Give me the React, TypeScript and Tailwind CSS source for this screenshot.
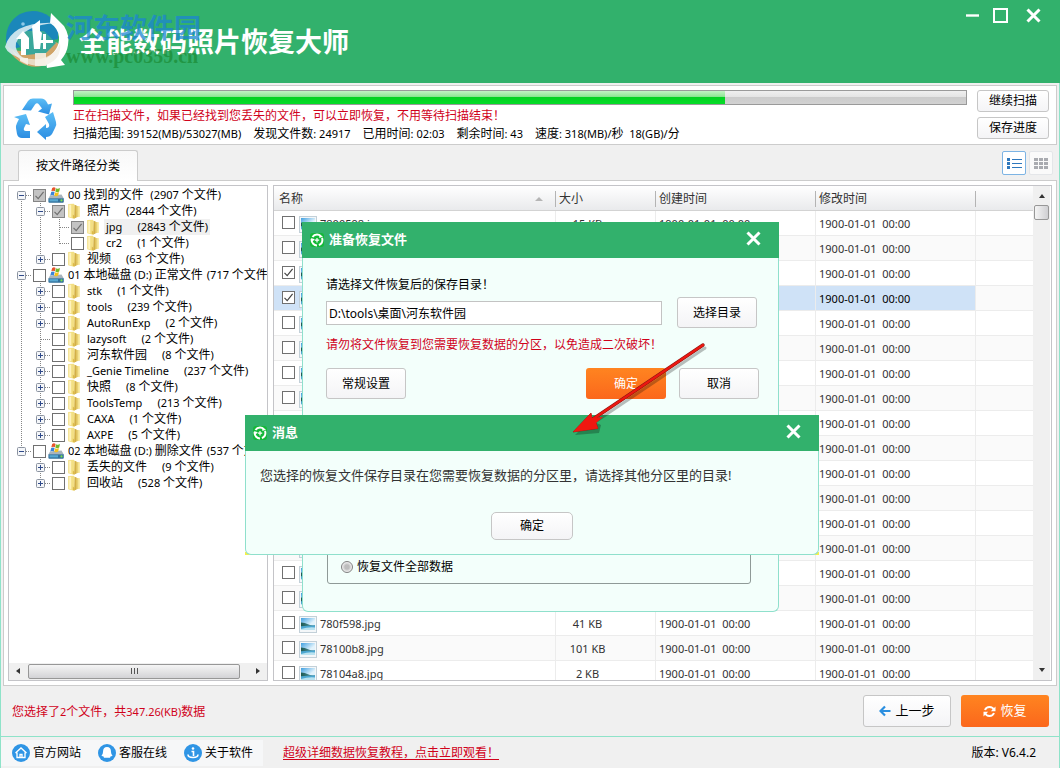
import React from "react";

/* Latin runs are set one pixel smaller than the Chinese glyphs around them. */
function Mixed({ text }: { text: string }) {
  const parts = text.split(/([\x20-\x7e]+)/);
  return (
    <>
      {parts.map((p, i) =>
        i % 2 ? (
          <span key={i} className="text-[11px]">
            {p}
          </span>
        ) : (
          p
        ),
      )}
    </>
  );
}

function Check({ label, checked = false, grey = false }: { label: string; checked?: boolean; grey?: boolean }) {
  return (
    <span className="grid size-[13px] shrink-0">
      <input
        type="checkbox"
        aria-label={label}
        defaultChecked={checked}
        className={`col-start-1 row-start-1 size-[13px] appearance-none border ${
          grey ? "border-[#858585] bg-[#c3c3c3]" : "border-[#707070] bg-white"
        }`}
      />
      {checked && (
        <svg viewBox="0 0 13 13" className="pointer-events-none col-start-1 row-start-1 size-[13px]" aria-hidden="true">
          <path d="M2.5 6.8 5.2 9.6 10.6 2.8" fill="none" stroke={grey ? "#6f6f6f" : "#444"} strokeWidth="1.2" />
        </svg>
      )}
    </span>
  );
}

function FolderIcon() {
  return (
    <svg viewBox="0 0 16 16" className="size-4 shrink-0" aria-hidden="true">
      <path d="M8 2.6 12.8 3.4V13.6L8 14.8Z" fill="#e9d174" />
      <path d="M11.400 3.400 12.800 3.600V13.400L11.400 13.900Z" fill="#fdf0ae" />
      <path d="M1.200 1 6.800 .8 7.600 1.800V15L6.800 15.800 1.200 14.200Z" fill="#f3df83" />
      <path d="M2.200 1.800 4.200 1.700V14.200L2.200 13.700Z" fill="#fff3bd" />
      <path d="M7.600 2 9.400 2.200V14.400L7.200 15.600Z" fill="#d3b047" />
      <path d="M5.800 11.500 7.600 13V15.400L5.800 15Z" fill="#dcb948" />
    </svg>
  );
}

function DiskIcon() {
  return (
    <svg viewBox="0 0 16 16" className="size-4 shrink-0" aria-hidden="true">
      <path d="M2 8.500 13.500 7.500 15.800 11.500H.4Z" fill="#a9b4bd" />
      <path d="M.4 11.300h15.400v3.400q0 1-1 1H1.400q-1 0-1-1Z" fill="#33719c" />
      <path d="M1.500 12.200h8.500v2.200H1.500z" fill="#58a9d2" />
      <circle cx="13.500" cy="13.400" r="1.100" fill="#7be04c" />
      <path d="M4.200 .9Q6 -.2 7.600 .9L6.800 4.300Q5.100 3.300 3.300 4.300Z" fill="#e8532b" />
      <path d="M8.100 1.200Q10 2.300 12 1L11.200 4.500Q9.300 5.700 7.300 4.600Z" fill="#74b82b" />
      <path d="M3.200 4.900Q4.900 3.900 6.600 4.900L5.800 8.400Q4.100 7.400 2.300 8.400Z" fill="#3b84d8" />
      <path d="M7.100 5.200Q9.100 6.300 11 5.100L10.200 8.600Q8.300 9.800 6.300 8.700Z" fill="#f5c01e" />
    </svg>
  );
}

function PhotoIcon() {
  return (
    <svg viewBox="0 0 18 17" className="h-[17px] w-[18px] shrink-0" aria-hidden="true">
      <defs>
        <linearGradient id="sky" x1="0" y1="0" x2="1" y2="1">
          <stop offset="0" stopColor="#3f9fe0" />
          <stop offset=".6" stopColor="#e2f3fc" />
        </linearGradient>
        <linearGradient id="hill" x1="0" y1="0" x2="1" y2="0">
          <stop offset="0" stopColor="#1d5a52" />
          <stop offset="1" stopColor="#5f9fae" />
        </linearGradient>
      </defs>
      <rect x=".5" y=".5" width="17" height="16" fill="#f4f7f9" stroke="#c3d0d8" />
      <rect x="2" y="2" width="14" height="12" fill="url(#sky)" />
      <path d="M2 6.500q4 .2 7 1.800t7 .7v2H2Z" fill="url(#hill)" />
      <path d="M2 10.300q6-.8 14-.8V14H2Z" fill="#4ba6d0" />
      <path d="M2 13q7-2.200 14-1.500V14H2Z" fill="#b9e2f0" />
    </svg>
  );
}

function BrandMark() {
  return (
    <svg viewBox="0 0 14 14" className="size-[14px] shrink-0" aria-hidden="true">
      <rect width="14" height="14" rx="3" fill="#14b838" />
      <circle cx="7" cy="7" r="5.400" fill="none" stroke="#fff" strokeWidth="2" strokeDasharray="9.300 2" strokeDashoffset="3" />
      <path d="M1 5 4.800 6.200 2.400 8.800ZM9.500 1.200 9.300 5 13 3.800Z" fill="#fff" />
      <path d="M7 5v4.400M4.800 7.200h4.400" stroke="#fff" strokeWidth="1.200" />
    </svg>
  );
}

function Cross() {
  return (
    <svg viewBox="0 0 15 15" className="size-[15px]" aria-hidden="true">
      <path d="M1.500 1.500 13.500 13.500M13.500 1.500 1.500 13.500" stroke="#fff" strokeWidth="3" />
    </svg>
  );
}

const plainButton =
  "flex items-center justify-center rounded-[3px] border border-[#c6c6c6] bg-linear-to-b from-white to-[#f4f4f6] text-black";
const orangeButton =
  "flex items-center justify-center rounded-[3px] bg-linear-to-b from-[#ff8420] to-[#fb671c] text-white";

/* ---------- tree ---------- */

type Guide = "none" | "v" | "plus" | "minus" | "tee" | "end";
type Node = {
  guides: Guide[];
  name: string;
  count: string;
  checked?: boolean;
  disk?: boolean;
  selected?: boolean;
  top?: boolean;
  bottom?: boolean;
};

const child = (name: string, count: string, guides: Guide[] = ["v", "plus"], bottom = false): Node => ({
  guides,
  name,
  count,
  bottom,
});

const nodes: Node[] = [
  { guides: ["minus"], name: "00 找到的文件 ", count: "(2907 个文件)", checked: true, disk: true, top: true },
  { guides: ["v", "minus"], name: "照片", count: "(2844 个文件)", checked: true },
  { guides: ["v", "v", "tee"], name: "jpg", count: "(2843 个文件)", checked: true, selected: true },
  { guides: ["v", "v", "end"], name: "cr2", count: "(1 个文件)" },
  child("视频", "(63 个文件)", ["v", "plus"], true),
  { guides: ["minus"], name: "01 本地磁盘 (D:) 正常文件", count: "(717 个文件)", disk: true },
  child("stk", "(1 个文件)"),
  child("tools", "(239 个文件)"),
  child("AutoRunExp", "(2 个文件)"),
  child("lazysoft", "(2 个文件)", ["v", "tee"]),
  child("河东软件园", "(8 个文件)"),
  child("_Genie Timeline", "(237 个文件)"),
  child("快照", "(8 个文件)"),
  child("ToolsTemp", "(213 个文件)"),
  child("CAXA", "(1 个文件)"),
  child("AXPE", "(5 个文件)", ["v", "plus"], true),
  { guides: ["minus"], name: "02 本地磁盘 (D:) 删除文件", count: "(537 个文件)", disk: true, bottom: true },
  child("丢失的文件", "(9 个文件)", ["none", "plus"]),
  child("回收站", "(528 个文件)", ["none", "plus"], true),
];

function GuideCell({ kind, top, bottom }: { kind: Guide; top?: boolean; bottom?: boolean }) {
  const box = kind === "plus" || kind === "minus";
  const half = kind === "end" || (box && bottom);
  return (
    <svg viewBox="0 0 19 16" className="h-4 w-[19px] shrink-0" aria-hidden="true">
      {kind !== "none" && (
        <path d={`M9.500 ${top ? 8 : 0}V${half ? 9 : 16}`} stroke="#858585" strokeDasharray="1 1" />
      )}
      {kind !== "none" && kind !== "v" && <path d="M10 8.500H19" stroke="#858585" strokeDasharray="1 1" />}
      {box && (
        <>
          <rect x="5.500" y="4.500" width="8" height="8" rx="1" fill="#f4f6f9" stroke="#8b93a0" />
          <path d={kind === "plus" ? "M7 8.500h5M9.500 6v5" : "M7 8.500h5"} stroke="#2f4a8a" />
        </>
      )}
    </svg>
  );
}

function Tree() {
  return (
    <ul className="min-h-0 flex-1 overflow-hidden pt-px pl-[3px]">
      {nodes.map((n) => (
        <li key={n.name} className="flex h-4 items-center whitespace-pre">
          {n.guides.map((g, i) => {
            const last = i === n.guides.length - 1;
            return <GuideCell key={i} kind={g} top={last && n.top} bottom={last && n.bottom} />;
          })}
          <span className="ml-0.5 flex">
            <Check label={n.name} checked={n.checked} grey={n.checked} />
          </span>
          <span className="ml-0.5 flex">{n.disk ? <DiskIcon /> : <FolderIcon />}</span>
          <span
            className={`ml-0.5 flex h-4 items-center px-0.5 leading-4 text-black ${n.disk ? "gap-1" : "gap-[15px]"} ${
              n.selected ? "bg-[#f0f0f0]" : ""
            }`}
          >
            <span>
              <Mixed text={n.name} />
            </span>
            <span>
              <Mixed text={n.count} />
            </span>
          </span>
        </li>
      ))}
    </ul>
  );
}

/* ---------- file table ---------- */

type FileRow = { name?: string; size?: string; created?: string; checked?: boolean; selected?: boolean };
const stamp = "1900-01-01  00:00";
const files: FileRow[] = Array.from({ length: 19 }, () => ({}));
files[0] = { name: "7800598.jpg", size: "15 KB", created: stamp };
files[2] = { checked: true };
files[3] = { checked: true, selected: true };
files[16] = { name: "780f598.jpg", size: "41 KB", created: stamp };
files[17] = { name: "78100b8.jpg", size: "101 KB", created: stamp };
files[18] = { name: "78104a8.jpg", size: "2 KB", created: stamp };

function FileTable() {
  const head = "h-[25px] bg-linear-to-b from-white to-[#e9eaec] border-b border-[#d3d3d3] p-0 pt-0.5 text-left font-normal";
  const inner = "flex h-4 items-center border-r border-[#b4b4b4] pl-[3px] leading-4";
  return (
    <div className="min-w-0 flex-1 overflow-hidden">
      <table className="w-full table-fixed border-separate border-spacing-0 text-[#333]">
        <colgroup>
          <col className="w-[282px]" />
          <col className="w-[100px]" />
          <col className="w-[160px]" />
          <col className="w-[160px]" />
          <col />
        </colgroup>
        <thead>
          <tr>
            <th className={head}>
              <div className="flex h-4 items-center justify-between border-r border-[#b4b4b4] pr-3 pl-[5px] leading-4">
                名称
                <svg viewBox="0 0 8 4" className="h-1 w-2" aria-hidden="true">
                  <path d="M4 0 8 4H0Z" fill="#b5b5b5" />
                </svg>
              </div>
            </th>
            <th className={head}>
              <div className={inner}>大小</div>
            </th>
            <th className={head}>
              <div className={inner}>创建时间</div>
            </th>
            <th className={head}>
              <div className={inner}>修改时间</div>
            </th>
            <th className={head} aria-label="空" />
          </tr>
        </thead>
        <tbody className="text-[11px]">
          {files.map((f, i) => {
            const tone = f.selected ? "bg-[#cfe2f7] text-black" : i % 2 ? "bg-[#fafafa]" : "bg-white";
            const cell = `h-[25px] border-r border-b border-[#ececec] p-0 pt-0.5 whitespace-pre ${tone}`;
            return (
              <tr key={i}>
                <td className={`h-[25px] border-r border-b border-[#ececec] p-0 whitespace-pre ${tone}`}>
                  <div className="flex h-6 items-center pl-2">
                    <span className="mb-px flex">
                      <Check label={f.name ?? `文件 ${i + 1}`} checked={f.checked} />
                    </span>
                    <span className="mt-0.5 mr-[3px] ml-1 flex">
                      <PhotoIcon />
                    </span>
                    <span className="pt-0.5">{f.name}</span>
                  </div>
                </td>
                <td className={`${cell} pr-9 text-center`}>{f.size}</td>
                <td className={`${cell} pl-[3px]`}>{f.created}</td>
                <td className={`${cell} pl-[3px]`}>{stamp}</td>
                <td className={`h-[25px] border-b border-[#ececec] p-0 ${i % 2 ? "bg-[#fafafa]" : "bg-white"}`} />
              </tr>
            );
          })}
        </tbody>
      </table>
    </div>
  );
}

/* ---------- dialogs ---------- */

function Dialog({ title, className, children }: { title: string; className: string; children: React.ReactNode }) {
  return (
    <section role="dialog" aria-label={title} className={`absolute flex flex-col ${className}`}>
      <header className="flex h-9 shrink-0 items-center gap-[5px] bg-[#32b16c] pr-[18px] pl-2 text-[13px] font-bold text-white">
        <BrandMark />
        <h2 className="flex-1">{title}</h2>
        <button type="button" aria-label="关闭" className="mb-1">
          <Cross />
        </button>
      </header>
      <div className="flex flex-1 flex-col rounded-b-md border border-t-0 border-[#8fe0cc] bg-[#f3fffb]">{children}</div>
    </section>
  );
}

function RestoreDialog() {
  return (
    <Dialog title="准备恢复文件" className="top-[222px] left-[302px] h-[390px] w-[477px]">
      <div className="flex flex-1 flex-col px-[23px] pt-[18px] pb-[27px] text-black">
        <label htmlFor="dir" className="leading-[18px]">
          请选择文件恢复后的保存目录！
        </label>
        <div className="mt-[3px] flex items-center gap-[15px]">
          <input
            id="dir"
            defaultValue="D:\tools\桌面\河东软件园"
            className="h-6 min-w-0 flex-1 border border-[#c3c3c3] bg-white px-0.5 text-xs"
          />
          <button type="button" className={`${plainButton} mr-[-2px] h-[31px] w-20`}>
            选择目录
          </button>
        </div>
        <p className="mt-2 leading-[18px] text-[#d0021b]">请勿将文件恢复到您需要恢复数据的分区，以免造成二次破坏！</p>
        <div className="mt-[14px] flex gap-[13px]">
          <button type="button" className={`${plainButton} mr-auto h-[31px] w-20`}>
            常规设置
          </button>
          <button type="button" className={`${orangeButton} h-[31px] w-20`}>
            确定
          </button>
          <button type="button" className={`${plainButton} mr-[-4px] h-[31px] w-20`}>
            取消
          </button>
        </div>
        <fieldset className="mx-px mt-4 mr-1 flex flex-1 items-end rounded-[3px] border border-[#8f9a97] pb-[7px] pl-[13px]">
          <label className="flex items-center gap-1 leading-[18px]">
            <input
              type="radio"
              name="mode"
              className="size-3 appearance-none rounded-full border border-[#808080] bg-radial from-[#bdbdbd] from-30% to-[#f2f2f2] to-70%"
            />
            恢复文件全部数据
          </label>
        </fieldset>
      </div>
    </Dialog>
  );
}

function MessageDialog() {
  return (
    <Dialog title="消息" className="top-[415px] left-[245px] h-[140px] w-[574px] bg-[linear-gradient(to_top,#f4f04a_3px,transparent_3px)]">
      <p className="px-[14px] pt-[15px] text-[13px] leading-[18px] text-[#333]">
        您选择的恢复文件保存目录在您需要恢复数据的分区里，请选择其他分区里的目录!
      </p>
      <button type="button" className={`${plainButton} mx-auto mt-7 h-7 w-[82px] rounded-[5px]`}>
        确定
      </button>
    </Dialog>
  );
}

/* ---------- window ---------- */

function Logo() {
  return (
    <svg viewBox="0 0 70 62" className="h-[62px] w-[70px] shrink-0" aria-hidden="true">
      <path d="M6 33Q5 14 20 5 36-2 50 8L58 18 58 30 12 40Q7 38 6 33Z" fill="#1b87ba" />
      <path d="M8 38Q22 46 36 38T58 34Q60 46 50 54 34 62 20 53 10 46 8 38Z" fill="#d0a468" />
      <path d="M16 32 26 22 44 22 56 34 46 44 26 46Z" fill="#3aa79b" />
      <path d="M51 4 64 17Q70 27 68 36 67 44 61 51L65 56 47 59 45 50Q60 41 59 28 58 19 50 14Z" fill="#fff" />
      <path d="M5 38Q12 12 56 14 24 16 16 34 14 42 24 50 8 46 5 38Z" fill="#d8ebf2" opacity=".9" />
      <path d="M12 41Q22 52 40 50 56 46 60 34 62 50 46 56 24 60 12 41Z" fill="#f1ede4" opacity=".75" />
      <path d="m16 30 7-8 6 7v11h-3q0 0 0 0V46h-5V30Z" fill="#fff" />
      <path d="M32 17 40 11 40 22 42 24 40 40 34 40Z" fill="#fff" />
      <path d="M20 49h8v7l-8-4ZM35 44h11v13H35Z" fill="#f7f3ea" opacity=".85" />
      <path d="M43 25h3v6h7v3h-7v6h-3v-6h-6v-3h6Z" fill="#fff" />
      <circle cx="23" cy="15" r="1.800" fill="#8cc9e8" />
    </svg>
  );
}

function RecycleIcon() {
  return (
    <svg viewBox="0 0 44 42" className="h-[42px] w-11 shrink-0" aria-hidden="true">
      <defs>
        <linearGradient id="rc" x1="0" y1="0" x2="0" y2="1">
          <stop offset="0" stopColor="#5bbdf5" />
          <stop offset="1" stopColor="#2b8de2" />
        </linearGradient>
      </defs>
      <path d="M8 12 14 3Q16 .6 19 .6h8q4 0 6 4l1 2 4-1-3 11-11-3 4-3-3-4q-2-2.500-4 0l-4 6Z" fill="url(#rc)" />
      <path d="m0 19 12-3 4 11-4-1-2 4q-1 3 2 3h4v7H8q-4 0-5-4l-1-6q-.4-2 1-5l2-4Z" fill="url(#rc)" />
      <path d="m31 19 8-5 3 10q1 3-1 6l-3 6q-2 3-6 3v3l-9-8 9-8v4q4 0 3-4Z" fill="url(#rc)" />
    </svg>
  );
}

function Arrow({ dir }: { dir: "up" | "down" | "left" | "right" }) {
  const d = { up: "M1 6h6L4 2Z", down: "M1 2h6L4 6Z", left: "M6 1v6L2 4Z", right: "M2 1v6l4-3Z" }[dir];
  return (
    <svg viewBox="0 0 8 8" className="size-2" aria-hidden="true">
      <path d={d} fill="#333" />
    </svg>
  );
}

function RoundIcon({ kind }: { kind: "home" | "bell" | "info" }) {
  return (
    <svg viewBox="0 0 18 18" className="size-[18px]" aria-hidden="true">
      <circle cx="9" cy="9" r="9" fill="#2f95e5" />
      {kind === "home" && (
        <path d="m3.500 9 5.500-5 5.500 5M5 8.500v5h8v-5M8 13.500v-3h2v3" fill="none" stroke="#fff" strokeWidth="1.300" />
      )}
      {kind === "bell" && (
        <path d="M9 3q4 0 4 5 0 2 1.500 3.600-.5 1-1.800.6L12 13.800H6l-.7-1.600q-1.300.4-1.800-.6Q5 10 5 8q0-5 4-5Z" fill="#fff" />
      )}
      {kind === "info" && (
        <>
          <circle cx="9" cy="4.500" r="1.300" fill="#fff" />
          <path d="M7.500 7.500H9.500V12M4 10.500q0 3 5 3t5-3" fill="none" stroke="#fff" strokeWidth="1.600" />
        </>
      )}
    </svg>
  );
}

export default function App() {
  return (
    <div className="relative flex h-screen min-h-[700px] flex-col overflow-hidden bg-[#f0f0f0] font-['Noto_Sans','Noto_Sans_CJK_SC',sans-serif] text-xs text-black">
      <header className="relative flex h-[83px] shrink-0 items-start bg-[#32b16c]">
        <div className="mt-[9px] flex">
          <Logo />
        </div>
        <h1 className="mt-6 ml-[9px] flex-1 text-[27px] leading-9 font-bold whitespace-nowrap text-white">
          全能数码照片恢复大师
        </h1>
        <div className="absolute top-3 left-[66px] whitespace-nowrap">
          <div className="text-[27px] leading-8 font-bold text-[#1c86d2]/75">河东软件园</div>
          <div className="font-['Liberation_Serif',serif] text-[20px] leading-6 font-bold text-[#1d8f3a]/80">
            www.pc0359.cn
          </div>
        </div>
        <div className="mt-2 mr-[19px] flex items-center gap-[14px]">
          <button type="button" aria-label="最小化">
            <svg viewBox="0 0 13 15" className="h-[15px] w-[13px]" aria-hidden="true">
              <path d="M0 7.500h13" stroke="#fff" strokeWidth="2.400" />
            </svg>
          </button>
          <button type="button" aria-label="最大化">
            <svg viewBox="0 0 15 15" className="size-[15px]" aria-hidden="true">
              <rect x="1" y="1" width="13" height="13" fill="none" stroke="#fff" strokeWidth="2" />
            </svg>
          </button>
          <button type="button" aria-label="关闭" className="ml-1">
            <Cross />
          </button>
        </div>
      </header>

      <div className="flex min-h-0 flex-1 flex-col border-x border-[#8fe3c9] px-0.5 pt-0.5">
        <section className="flex h-[60px] shrink-0 border border-[#cccccc] bg-white pr-[7px]">
          <div className="mt-3 ml-[10px]">
            <RecycleIcon />
          </div>
          <div className="mt-1 ml-[15px] min-w-0 flex-1">
            <div
              role="progressbar"
              aria-valuenow={73}
              aria-label="扫描进度"
              className="h-[15px] border border-[#9a9a9a] bg-[linear-gradient(#efefef_0%,#e4e4e4_45%,#cbcbcb_50%,#d2d2d2_100%)]"
            >
              <div className="h-full w-[73%] bg-[linear-gradient(#c2f2c4_0%,#8fe695_42%,#04d022_50%,#05dd28_100%)]" />
            </div>
            <p className="mt-0.5 leading-[18px] whitespace-nowrap text-[#d0021b]">
              正在扫描文件，如果已经找到您丢失的文件，可以立即恢复，不用等待扫描结束！
            </p>
            <p className="flex gap-3 leading-[18px] whitespace-pre">
              <span>
                <Mixed text="扫描范围: 39152(MB)/53027(MB)" />
              </span>
              <span>
                <Mixed text="发现文件数: 24917" />
              </span>
              <span>
                <Mixed text="已用时间: 02:03" />
              </span>
              <span>
                <Mixed text="剩余时间: 43" />
              </span>
              <span>
                <Mixed text="速度: 318(MB)/秒  18(GB)/分" />
              </span>
            </p>
          </div>
          <div className="mt-1 ml-[10px] flex flex-col gap-[5px]">
            <button type="button" className={`${plainButton} h-[22px] w-[72px]`}>
              继续扫描
            </button>
            <button type="button" className={`${plainButton} h-[22px] w-[72px]`}>
              保存进度
            </button>
          </div>
        </section>

        <div className="flex h-[35px] shrink-0 items-end justify-between pr-1 pl-[15px]">
          <button
            type="button"
            className="relative -mb-px h-[31px] w-[120px] rounded-t-[3px] border border-b-0 border-[#cccccc] bg-linear-to-b from-[#f8f8f8] to-white"
          >
            按文件路径分类
          </button>
          <div className="mb-[5px] flex gap-[3px]">
            <button
              type="button"
              aria-label="列表"
              className="flex size-6 items-center justify-center rounded-[2px] border border-[#7db4e4] bg-white"
            >
              <svg viewBox="0 0 15 11" className="h-[11px] w-[15px]" aria-hidden="true">
                <path d="M0 0h3v3H0zM0 4h3v3H0zM0 8h3v3H0z" fill="#2f78bd" />
                <path d="M5 1.500h10M5 5.500h10M5 9.500h10" stroke="#2f78bd" />
              </svg>
            </button>
            <button
              type="button"
              aria-label="网格"
              className="flex size-6 items-center justify-center rounded-[2px] border border-[#e4e6e9] bg-[#fafafa]"
            >
              <svg viewBox="0 0 14 11" className="h-[11px] w-[14px]" aria-hidden="true">
                <path
                  d="M0 0h4v3H0zM5 0h4v3H5zM10 0h4v3h-4zM0 4h4v3H0zM5 4h4v3H5zM10 4h4v3h-4zM0 8h4v3H0zM5 8h4v3H5zM10 8h4v3h-4z"
                  fill="#a9abb0"
                />
              </svg>
            </button>
          </div>
        </div>

        <main className="flex min-h-0 flex-1 gap-[5px] border border-[#cccccc] bg-white p-1">
          <aside className="flex w-[260px] shrink-0 flex-col border border-[#c4c4c8]">
            <Tree />
            <div className="flex h-[17px] shrink-0 items-center gap-1.5 bg-[#f0f0f0] px-[5px] pb-px">
              <Arrow dir="left" />
              <div className="flex h-[15px] w-[212px] items-center justify-center gap-0.5 rounded-[2px] border border-[#979797] bg-linear-to-b from-[#f5f5f5] to-[#d3d3d6]">
                <i className="h-1.5 w-px bg-[#555]" />
                <i className="h-1.5 w-px bg-[#555]" />
                <i className="h-1.5 w-px bg-[#555]" />
              </div>
              <span className="ml-auto">
                <Arrow dir="right" />
              </span>
            </div>
          </aside>
          <section className="flex min-w-0 flex-1 border border-[#c4c4c8] pr-px">
            <FileTable />
            <div className="flex w-[17px] shrink-0 flex-col items-center bg-[#f0f0f0] pt-1.5 pb-1.5">
              <Arrow dir="up" />
              <div className="mt-[5px] h-[15px] w-[15px] rounded-[2px] border border-[#979797] bg-linear-to-r from-[#f5f5f5] to-[#cfcfd2]" />
              <span className="mt-auto">
                <Arrow dir="down" />
              </span>
            </div>
          </section>
        </main>

        <div className="flex h-[50px] shrink-0 items-center gap-[10px] pr-2 pl-[9px]">
          <p className="flex-1 pt-0.5 text-[#d0021b]">
            <Mixed text="您选择了2个文件，共347.26(KB)数据" />
          </p>
          <button type="button" className={`${plainButton} h-8 w-[88px] gap-1 text-[13px]`}>
            <svg viewBox="0 0 12 12" className="size-3" aria-hidden="true">
              <path d="M11.500 6H2M6 1.500 1.500 6 6 10.500" fill="none" stroke="#2b8fe0" strokeWidth="2.200" />
            </svg>
            上一步
          </button>
          <button type="button" className={`${orangeButton} h-8 w-[88px] gap-1 text-[13px]`}>
            <svg viewBox="0 0 13 13" className="size-[13px]" aria-hidden="true">
              <path d="M2 5Q3.200 2 6.500 2T11 5M11 8Q9.800 11 6.500 11T2 8" fill="none" stroke="#fff" strokeWidth="2" />
              <path d="M12.500 1.500v4.800H7.800ZM.5 11.500V6.700h4.700Z" fill="#fff" />
            </svg>
            恢复
          </button>
        </div>
      </div>

      <footer className="flex h-8 shrink-0 items-center border-x border-t border-[#8fe3c9] pr-[23px]">
        <nav className="flex h-[26px] w-[262px] items-center gap-[17px] bg-[#f6f7f8] pl-[11px]">
          <a href="#site" className="flex items-center gap-[3px]">
            <RoundIcon kind="home" />
            官方网站
          </a>
          <a href="#service" className="flex items-center gap-[3px]">
            <RoundIcon kind="bell" />
            客服在线
          </a>
          <a href="#about" className="flex items-center gap-[3px]">
            <RoundIcon kind="info" />
            关于软件
          </a>
        </nav>
        <a href="#tutorial" className="ml-5 text-[#d0021b] underline underline-offset-2">
          超级详细数据恢复教程，点击立即观看！
        </a>
        <p className="ml-auto">版本: V6.4.2</p>
      </footer>

      <RestoreDialog />
      <MessageDialog />

      <svg viewBox="0 0 140 96" className="pointer-events-none absolute top-[340px] left-[569px] h-24 w-[140px]" aria-hidden="true">
        <g transform="translate(2 3)" opacity=".25">
          <path d="M134 5 24 79" stroke="#000" strokeWidth="3" strokeLinecap="round" />
          <path d="M4 92 23 73 23 79 30 82 28 90Z" fill="#000" />
        </g>
        <path d="M134 5 24 79" stroke="#8e1512" strokeWidth="3.400" strokeLinecap="round" />
        <path d="M134 5 24 79" stroke="#ec1710" strokeWidth="2.200" strokeLinecap="round" />
        <path d="M4 92 22 73 23 78 27 83 29 88.500Z" fill="#f01810" stroke="#8e1512" strokeWidth=".7" />
        <path d="M4 92 22 73 23 78 34 77 27 83 29 88.500Z" fill="#f01810" />
      </svg>
    </div>
  );
}
